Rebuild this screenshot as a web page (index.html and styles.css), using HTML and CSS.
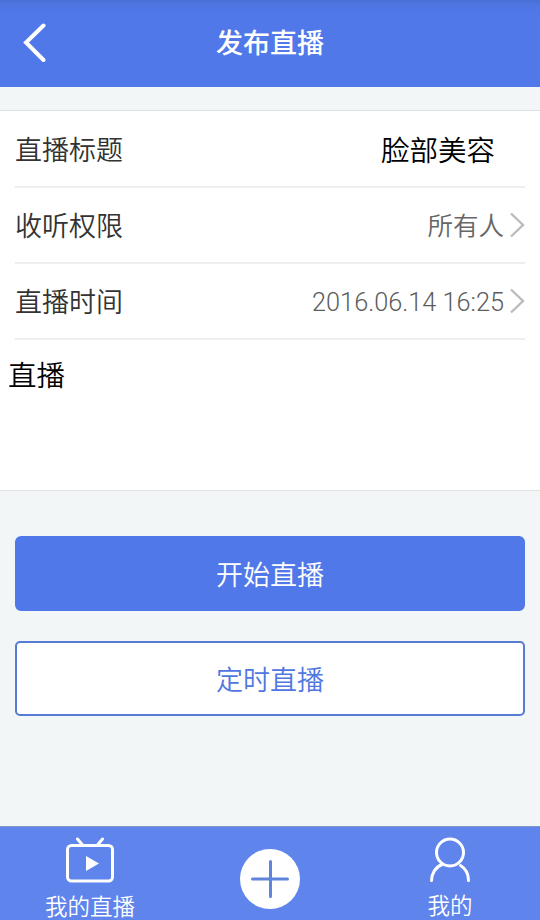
FILE: index.html
```html
<!DOCTYPE html>
<html lang="zh-CN">
<head>
<meta charset="utf-8">
<title>发布直播</title>
<link rel="stylesheet" href="styles.css">
</head>
<body>
<header class="header">
  <svg class="back" viewBox="0 0 24 40"><path d="M20.5 2.5 L3 19.5 L20.5 37"/></svg>
  <h1>发布直播</h1>
</header>
<main class="content">
  <section class="form">
    <div class="row"><span class="label">直播标题</span><span class="title-value">脸部美容</span></div>
    <div class="row"><span class="label">收听权限</span><span class="value">所有人</span><svg class="chevron" viewBox="0 0 16 26"><path d="M2 1.5 L14 13 L2 24.5"/></svg></div>
    <div class="row"><span class="label">直播时间</span><span class="value date">2016.06.14 16:25</span><svg class="chevron" viewBox="0 0 16 26"><path d="M2 1.5 L14 13 L2 24.5"/></svg></div>
    <div class="description">直播</div>
  </section>
  <div class="actions">
    <button class="button primary">开始直播</button>
    <button class="button outline">定时直播</button>
  </div>
</main>
<nav class="tabs">
  <a class="tab"><svg class="tv" viewBox="0 0 50 47"><rect x="2.5" y="8.5" width="45" height="35.5" rx="4"/><path d="M12.5 2l5 6M37.5 2l-5 6"/><path class="play" d="M21 19v15l13-7.5z"/></svg><span>我的直播</span></a>
  <a class="tab add"><svg class="plus" viewBox="0 0 60 60"><circle cx="30" cy="30" r="30"/><path d="M12.5 30h35M30.5 12.5v35"/></svg></a>
  <a class="tab"><svg class="person" viewBox="0 0 42 46"><circle cx="21" cy="15.5" r="13.5"/><path d="M2.5 43.5c0-7 4-13.500 10.500-16M39.500 43.500c0-6-3-12-8-15"/></svg><span>我的</span></a>
</nav>
</body>
</html>
```
FILE: styles.css
```css
* { box-sizing: border-box; }
body { margin: 0; height: 920px; display: flex; flex-direction: column; overflow: hidden; background: #f2f6f7; color: #333; font-family: Roboto, "Noto Sans CJK SC", sans-serif; font-weight: 350; }
.header { height: 87px; flex: none; display: grid; grid-template-columns: 60px 1fr 60px; align-items: center; background: linear-gradient(#496fd3 0, #4f75e2 5px, #5078e9 14px); color: #fff; }
.back { width: 24px; height: 40px; margin: -2px 0 0 23px; fill: none; stroke: #fff; stroke-width: 4; stroke-linecap: round; }
h1 { margin: 0; text-align: center; font-size: 27px; line-height: 40px; font-weight: 500; }
.content { flex: 1; padding-top: 23px; }
.form { height: 381px; padding-top: 1px; background: #fff; border-top: 1px solid #dce2e3; border-bottom: 1px solid #dce2e3; }
.row { height: 76px; margin: 0 15px; display: flex; align-items: center; border-bottom: 2px solid #eee; font-size: 27px; }
.label { margin-right: auto; padding-bottom: 2px; }
.title-value { color: #000; font-size: 28.5px; margin-right: 30px; padding-bottom: 2px; }
.value { color: #666; font-size: 25.5px; padding-bottom: 3px; }
.date { color: #5c5c5c; font-size: 25.3px; font-weight: 300; padding: 2px 0 0; }
.chevron { width: 16px; height: 26px; margin-left: 5px; fill: none; stroke: #bbb; stroke-width: 2.4; }
.description { padding: 16px 8px; color: #000; font-size: 28.5px; line-height: 42px; }
.actions { display: grid; gap: 30px; padding: 45px 15px; }
.button { height: 75px; padding: 0; border: 2px solid #5078e9; border-radius: 6px; font: 350 27px Roboto, "Noto Sans CJK SC", sans-serif; }
.primary { background: #5078e9; color: #fff; }
.outline { background: #fff; color: #4f77df; border-color: #557bd2; border-radius: 5px; }
.tabs { height: 94px; flex: none; display: grid; grid-template-columns: repeat(3, 1fr); border-top: 1px solid #8496c9; background: #5f84eb; color: #fff; }
.tab { display: flex; flex-direction: column; align-items: center; padding-top: 10px; font-size: 22.5px; line-height: 34px; }
.tab svg { flex: none; fill: none; stroke: #fff; stroke-width: 3; stroke-linecap: round; }
.tab span { margin-top: 6px; }
.tv { width: 50px; height: 47px; }
.person { width: 42px; height: 46px; }
.tab .play { fill: #fff; stroke: none; }
.add { padding-top: 22px; }
.plus { width: 60px; height: 60px; }
.tab .plus circle { fill: #fff; stroke: none; }
.tab .plus path { stroke: #5f84dc; }
```
